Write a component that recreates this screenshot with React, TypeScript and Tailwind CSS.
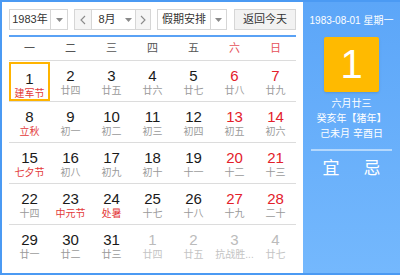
import * as React from "react";

type Day = { d: number; sub: string; red?: boolean; subRed?: boolean; muted?: boolean; sel?: boolean };

const weeks: Day[][] = [
  [
    { d: 1, sub: "建军节", subRed: true, sel: true },
    { d: 2, sub: "廿四" },
    { d: 3, sub: "廿五" },
    { d: 4, sub: "廿六" },
    { d: 5, sub: "廿七" },
    { d: 6, sub: "廿八", red: true },
    { d: 7, sub: "廿九", red: true },
  ],
  [
    { d: 8, sub: "立秋", subRed: true },
    { d: 9, sub: "初一" },
    { d: 10, sub: "初二" },
    { d: 11, sub: "初三" },
    { d: 12, sub: "初四" },
    { d: 13, sub: "初五", red: true },
    { d: 14, sub: "初六", red: true },
  ],
  [
    { d: 15, sub: "七夕节", subRed: true },
    { d: 16, sub: "初八" },
    { d: 17, sub: "初九" },
    { d: 18, sub: "初十" },
    { d: 19, sub: "十一" },
    { d: 20, sub: "十二", red: true },
    { d: 21, sub: "十三", red: true },
  ],
  [
    { d: 22, sub: "十四" },
    { d: 23, sub: "中元节", subRed: true },
    { d: 24, sub: "处暑", subRed: true },
    { d: 25, sub: "十七" },
    { d: 26, sub: "十八" },
    { d: 27, sub: "十九", red: true },
    { d: 28, sub: "二十", red: true },
  ],
  [
    { d: 29, sub: "廿一" },
    { d: 30, sub: "廿二" },
    { d: 31, sub: "廿三" },
    { d: 1, sub: "廿四", muted: true },
    { d: 2, sub: "廿五", muted: true },
    { d: 3, sub: "抗战胜...", muted: true },
    { d: 4, sub: "廿七", muted: true },
  ],
];

const weekdays = ["一", "二", "三", "四", "五", "六", "日"];

function Caret() {
  return (
    <svg width="7" height="4" viewBox="0 0 7 4">
      <path d="M0 0h7L3.5 4z" fill="#8a8a8a" />
    </svg>
  );
}

function Chevron({ dir }: { dir: "l" | "r" }) {
  return (
    <svg width="6" height="10" viewBox="0 0 6 10">
      <path d={dir === "l" ? "M5 1L1 5l4 4" : "M1 1l4 4-4 4"} fill="none" stroke="#8a8a8a" strokeWidth="1.1" />
    </svg>
  );
}

function Select({ label, w, labelW }: { label: string; w: string; labelW: string }) {
  return (
    <div className={`flex h-[21px] ${w} border border-[#d6d6d6] bg-white`}>
      <div className={`flex ${labelW} items-center justify-center border-r border-[#d6d6d6]`}>{label}</div>
      <div className="flex flex-1 items-center justify-center">
        <Caret />
      </div>
    </div>
  );
}

export default function App() {
  return (
    <div
      className="flex h-[275px] w-[400px] border-2 border-r-0 border-[#4b9af3] bg-[#64acfa] text-[11px] text-[#333]"
      style={{ fontFamily: '"Liberation Sans", "Noto Sans CJK SC", sans-serif' }}
    >
      {/* left: calendar */}
      <div className="flex w-[301px] flex-col bg-white px-[7px] pt-[7px]">
        <div className="flex items-center">
          <Select label="1983年" w="w-[59px]" labelW="w-[41px]" />
          <div className="ml-[6px] flex h-[21px] w-[77px] border border-[#d6d6d6]">
            <div className="flex w-[17px] items-center justify-center border-r border-[#d6d6d6] bg-[#f5f5f5]">
              <Chevron dir="l" />
            </div>
            <div className="flex w-[30px] items-center justify-center">8月</div>
            <div className="flex w-[13px] items-center justify-center">
              <Caret />
            </div>
            <div className="flex flex-1 items-center justify-center border-l border-[#d6d6d6] bg-[#f5f5f5]">
              <Chevron dir="r" />
            </div>
          </div>
          <div className="ml-[6px]">
            <Select label="假期安排" w="w-[70px]" labelW="w-[53px]" />
          </div>
          <div className="ml-[7px] flex h-[21px] w-[62px] items-center justify-center border border-[#d6d6d6] bg-[#f2f2f2]">
            返回今天
          </div>
        </div>
        <div className="mt-[5px] h-[2px] w-[287px] bg-[#5aa2f5]" />
        <div className="grid h-[24px] w-[287px] grid-cols-7 items-center border-b border-[#dcdcdc]">
          {weekdays.map((w, i) => (
            <div key={w} className={`text-center ${i > 4 ? "text-[#e6525a]" : "text-[#555]"}`}>
              {w}
            </div>
          ))}
        </div>
        {weeks.map((row, ri) => (
          <div
            key={ri}
            className={`grid h-[41px] w-[287px] grid-cols-7 ${ri < 4 ? "border-b border-[#dcdcdc]" : ""}`}
          >
            {row.map((c, ci) => (
              <div
                key={ci}
                className={`flex flex-col items-center whitespace-nowrap pt-[6px] ${
                  c.sel ? "mt-[1px] h-[39px] border-2 border-[#ffb400] pt-[3px]" : ""
                }`}
              >
                <div
                  className={`text-[15px] leading-[17px] ${
                    c.muted ? "text-[#bbb]" : c.red ? "text-[#e3202a]" : "text-[#1a1a1a]"
                  }`}
                >
                  {c.d}
                </div>
                <div
                  className={`text-[10px] leading-[14px] ${
                    c.subRed ? "text-[#e33a3a]" : c.muted ? "text-[#c4c4c4]" : "text-[#9a9a9a]"
                  }`}
                >
                  {c.sub}
                </div>
              </div>
            ))}
          </div>
        ))}
      </div>

      {/* right: detail */}
      <div className="flex flex-1 flex-col items-center bg-gradient-to-b from-[#5ca6f8] to-[#74b8fd] text-white">
        <div className="mt-[13px] whitespace-nowrap text-[10px] leading-[12px]">1983-08-01 星期一</div>
        <div className="mt-[10px] flex h-[55px] w-[55px] items-center justify-center rounded-[2px] bg-[#ffba00] pb-[2px] text-[40px] leading-none shadow-sm">
          1
        </div>
        <div className="mt-[4px] text-[10px] leading-[15px]">六月廿三</div>
        <div className="text-[10px] leading-[15px]">癸亥年【猪年】</div>
        <div className="text-[10px] leading-[15px]">己未月 辛酉日</div>
        <div className="mt-[8px] h-[2px] w-[81px] bg-white/50" />
        <div className="mt-[8px] flex gap-[24px] text-[17px] leading-[20px]">
          <span>宜</span>
          <span>忌</span>
        </div>
      </div>
    </div>
  );
}
